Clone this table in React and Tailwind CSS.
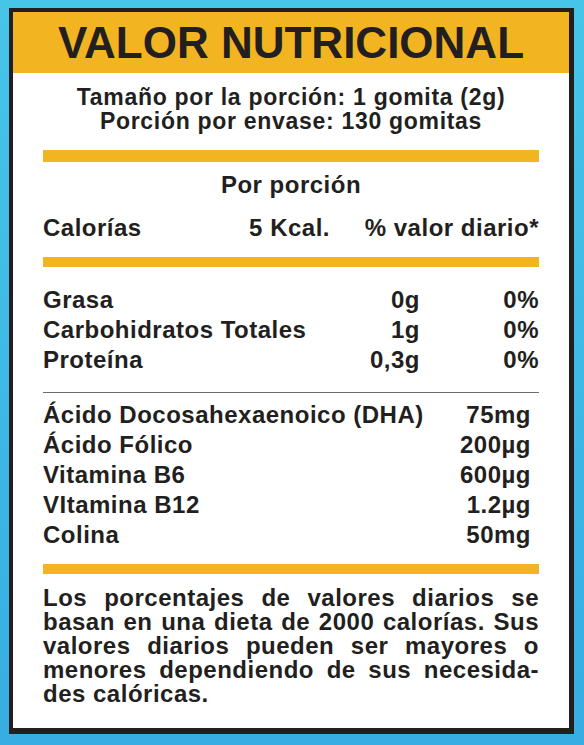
import React from "react";

const macros = [
  { name: "Grasa", amount: "0g", pct: "0%" },
  { name: "Carbohidratos Totales", amount: "1g", pct: "0%" },
  { name: "Proteína", amount: "0,3g", pct: "0%" },
];

const vitamins = [
  { name: "Ácido Docosahexaenoico (DHA)", amount: "75mg" },
  { name: "Ácido Fólico", amount: "200µg" },
  { name: "Vitamina B6", amount: "600µg" },
  { name: "VItamina B12", amount: "1.2µg" },
  { name: "Colina", amount: "50mg" },
];

const note = [
  "Los porcentajes de valores diarios se",
  "basan en una dieta de 2000 calorías. Sus",
  "valores diarios pueden ser mayores o",
  "menores dependiendo de sus necesida-",
];

const App = () => {
  return (
    <div className="w-full min-h-[745px] bg-gradient-to-b from-[#47c5e8] to-[#37ade3] pt-[8px] pl-[9px] pr-[10px] pb-[11px] [font-family:'Liberation_Sans',Arial,sans-serif] text-[#231f20]">
      <div className="h-[726px] bg-white border-l-4 border-t-4 border-r-[5px] border-b-[6px] border-[#231f20] flex flex-col">
        <div className="h-[61px] bg-[#f3b421] flex items-center justify-center">
          <h1 className="text-[44px] font-bold leading-none">VALOR NUTRICIONAL</h1>
        </div>

        <div className="px-[30px] text-[24px] font-bold tracking-[0.5px] leading-[24px]">
          <div className="mt-[12px] text-center text-[23px] tracking-[0.7px]">
            <p>Tamaño por la porción: 1 gomita (2g)</p>
            <p>Porción por envase: 130 gomitas</p>
          </div>

          <div className="mt-[17px] h-[12px] bg-[#f3b421]" />

          <p className="mt-[11px] text-center">Por porción</p>

          <div className="mt-[19px] grid grid-cols-[1fr_auto_209px]">
            <span>Calorías</span>
            <span>5 Kcal.</span>
            <span className="text-right">% valor diario*</span>
          </div>

          <div className="mt-[17px] h-[10px] bg-[#f3b421]" />

          <div className="mt-[18px] leading-[30px]">
            {macros.map((row) => (
              <div key={row.name} className="grid grid-cols-[1fr_auto_119px]">
                <span>{row.name}</span>
                <span className="text-right">{row.amount}</span>
                <span className="text-right">{row.pct}</span>
              </div>
            ))}
          </div>

          <div className="mt-[17px] h-px bg-[#6b6b6b]" />

          <div className="mt-[7px] leading-[30px]">
            {vitamins.map((row) => (
              <div key={row.name} className="flex justify-between pr-[8px]">
                <span>{row.name}</span>
                <span>{row.amount}</span>
              </div>
            ))}
          </div>

          <div className="mt-[14px] h-[10px] bg-[#f3b421]" />

          <div className="mt-[12px]">
            {note.map((line) => (
              <p key={line} className="text-justify [text-align-last:justify]">
                {line}
              </p>
            ))}
            <p>des calóricas.</p>
          </div>
        </div>
      </div>
    </div>
  );
};

export default App;
